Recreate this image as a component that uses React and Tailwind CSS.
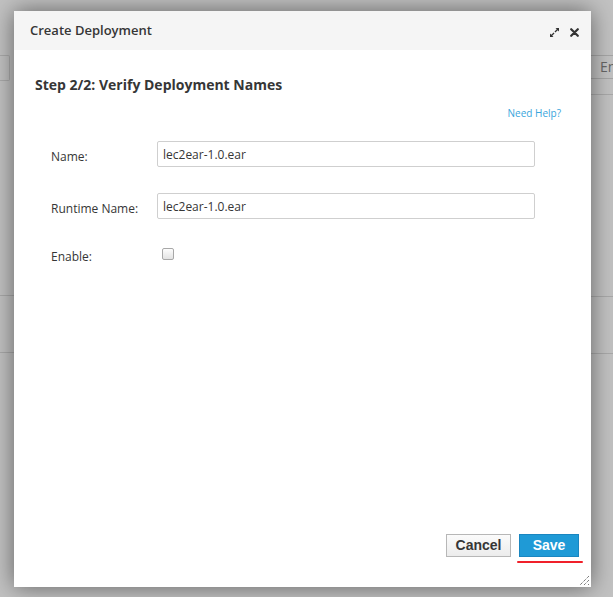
import { useState } from 'react';

const ExpandIcon = () => (
  <svg width="11" height="11" viewBox="0 0 11 11" className="text-[#333]">
    <path d="M6.5 1H10v3.5L8.7 3.2 6.4 5.5 5.5 4.6 7.8 2.3z" fill="currentColor" />
    <path d="M4.5 10H1V6.5l1.3 1.3 2.3-2.3.9.9-2.3 2.3z" fill="currentColor" />
  </svg>
);

const CloseIcon = () => (
  <svg width="9" height="9" viewBox="0 0 9 9" className="text-[#333]">
    <path d="M1.2 1.2l6.6 6.6M7.8 1.2L1.2 7.8" stroke="currentColor" strokeWidth="2.2" strokeLinecap="round" />
  </svg>
);

const ResizeGrip = () => (
  <svg width="12" height="12" viewBox="0 0 12 12">
    <path d="M11 2L2 11M11 6L6 11M11 10L10 11" stroke="#444" strokeWidth="1" strokeDasharray="1 1" />
  </svg>
);

const FormRow = ({ label, children, className = '' }) => (
  <div className={`flex items-center ${className}`}>
    <label className="w-[106px] pt-[6px] text-[12px] text-[#363636]">{label}</label>
    {children}
  </div>
);

const App = () => {
  const [form, setForm] = useState({ name: 'lec2ear-1.0.ear', runtime: 'lec2ear-1.0.ear', enable: false });

  const handleChange = (e) => {
    const { name, value, type, checked } = e.target;
    setForm({ ...form, [name]: type === 'checkbox' ? checked : value });
  };

  return (
    <div
      className="relative w-[613px] h-[597px] overflow-hidden bg-[#c2c2c2]"
      style={{ fontFamily: '"Open Sans", "Noto Sans", sans-serif' }}
    >
      {/* page behind the overlay */}
      <div className="flex justify-between h-full">
        <div className="w-[14px] flex flex-col">
          <div className="mt-[55px] h-[26px] w-[10px] border border-l-0 border-[#aaa] rounded-r-[2px]"></div>
          <div className="mt-[214px] border-t border-[#a9a9a9]"></div>
          <div className="mt-[56px] border-t border-[#a9a9a9]"></div>
        </div>
        <div className="w-[22px] flex flex-col">
          <div className="mt-[55px] h-[24px] border-y border-[#a6a6a6] pl-[9px] text-[14px] leading-[22px] text-[#666] overflow-hidden whitespace-nowrap">
            En
          </div>
          <div className="mt-[15px] border-t border-[#a9a9a9]"></div>
          <div className="mt-[201px] border-t border-[#a9a9a9]"></div>
          <div className="mt-[56px] border-t border-[#a9a9a9]"></div>
        </div>
      </div>

      {/* modal */}
      <div className="absolute left-[14px] top-[11px] w-[577px] h-[576px] bg-white flex flex-col shadow-[0_0_22px_rgba(0,0,0,0.5)]">
        <div className="h-[39px] bg-[#f5f5f5] flex items-center justify-between pl-[16px] pr-[12px]">
          <h3 className="text-[13px] font-semibold text-[#363636]">Create Deployment</h3>
          <div className="flex items-center gap-[10px] pt-[4px]">
            <ExpandIcon />
            <CloseIcon />
          </div>
        </div>

        <div className="flex-1 flex flex-col pl-[21px] pr-[30px] pt-[25px]">
          <h2 className="text-[14px] leading-[20px] font-bold text-[#363636]">
            Step 2/2: Verify Deployment Names
          </h2>
          <div className="mt-[11px] flex justify-end">
            <a href="#" className="text-[10px] leading-[14px] text-[#39a5dc]">Need Help?</a>
          </div>

          <div className="pl-[16px] mt-[21px] flex flex-col">
            <FormRow label="Name:">
              <input
                name="name"
                value={form.name}
                onChange={handleChange}
                className="w-[378px] h-[26px] px-[5px] text-[12px] text-[#363636] border border-[#cfcfcf] rounded-[2px] outline-none"
              />
            </FormRow>
            <FormRow label="Runtime Name:" className="mt-[26px]">
              <input
                name="runtime"
                value={form.runtime}
                onChange={handleChange}
                className="w-[378px] h-[26px] px-[5px] text-[12px] text-[#363636] border border-[#cfcfcf] rounded-[2px] outline-none"
              />
            </FormRow>
            <FormRow label="Enable:" className="mt-[22px] h-[26px]">
              <span className="ml-[5px] mb-[1px] w-[12px] h-[12px] rounded-[2px] border border-[#a8a8a8] bg-gradient-to-b from-[#fdfdfd] to-[#e3e3e3] inline-block">
                <input
                  type="checkbox"
                  name="enable"
                  checked={form.enable}
                  onChange={handleChange}
                  className="opacity-0 w-full h-full block"
                />
              </span>
            </FormRow>
          </div>

          <div className="mt-auto mb-[30px] -mr-[18px] flex items-start justify-end gap-[8px]">
            <button
              type="button"
              className="block w-[65px] h-[23px] border border-[#b7b7b7] bg-gradient-to-b from-[#fbfbfb] to-[#ececec] text-[14px] font-bold text-[#363636]"
              style={{ fontFamily: '"Liberation Sans", Arial, sans-serif' }}
            >
              Cancel
            </button>
            <div className="relative">
              <button
                type="button"
                className="block w-[60px] h-[23px] border border-[#1a86c0] bg-[#1f9ad6] text-[14px] font-bold text-white"
                style={{ fontFamily: '"Liberation Sans", Arial, sans-serif' }}
              >
                Save
              </button>
              <div className="absolute left-[-2px] top-[27px] w-[66px] h-[2px] rounded-full bg-[#f0202a]"></div>
            </div>
          </div>
        </div>

        <div className="absolute right-[1px] bottom-[1px]">
          <ResizeGrip />
        </div>
      </div>
    </div>
  );
};

export default App;
